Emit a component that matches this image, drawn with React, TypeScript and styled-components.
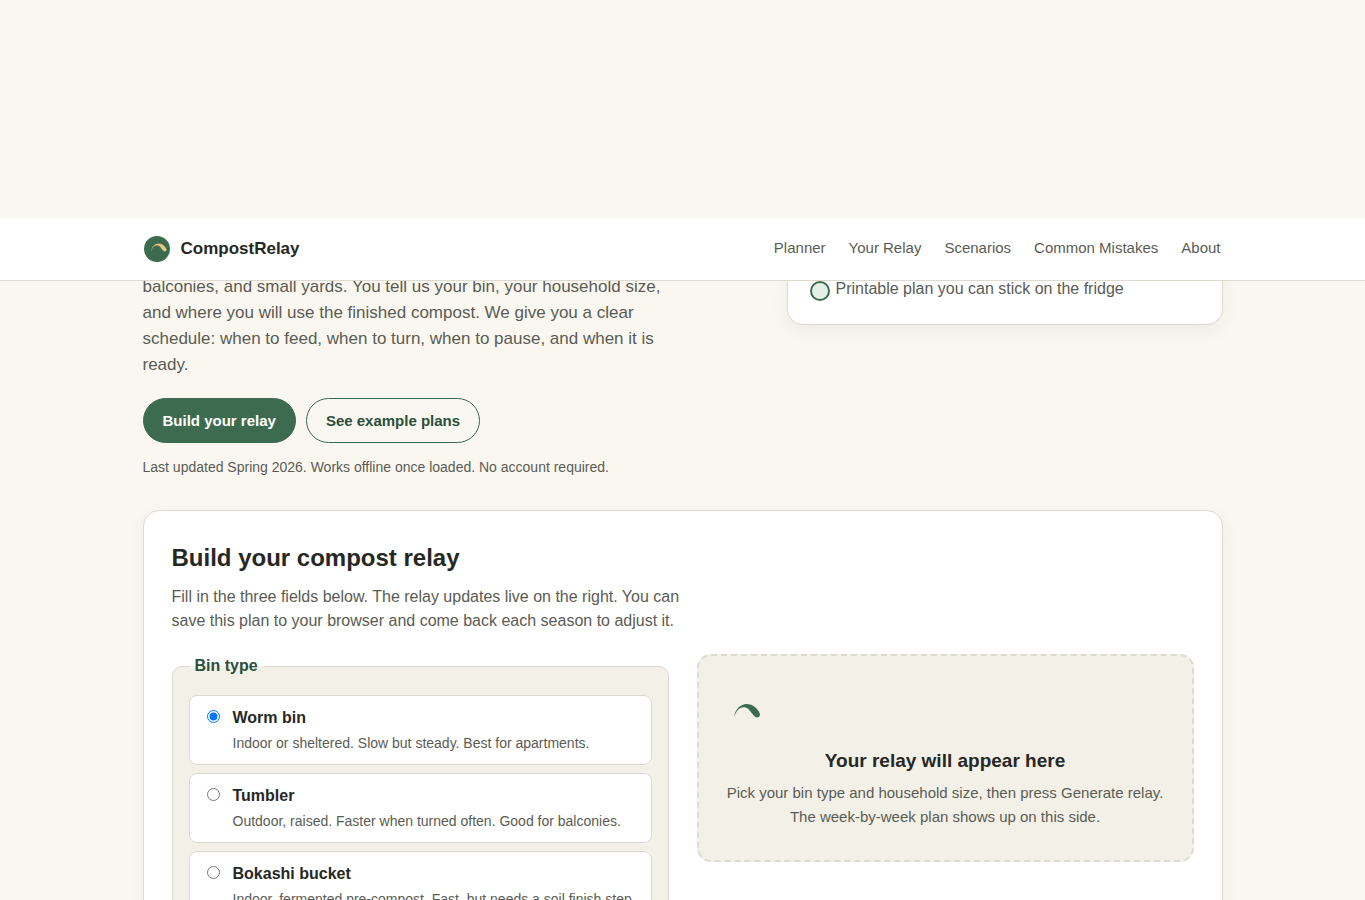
import React, { useState } from "react";
import styled, { createGlobalStyle } from "styled-components";

const color = {
  page: "#faf7f1",
  surface: "#ffffff",
  sunken: "#f3f0e8",
  line: "#dddbd0",
  ink: "#262824",
  muted: "#5a5c54",
  green: "#3d6b4f",
  greenDark: "#2a4f3a",
  mint: "#e3f0e7",
  sand: "#e6c77f",
};

const GlobalStyle = createGlobalStyle`
  *, *::before, *::after { box-sizing: border-box; }
  body {
    margin: 0;
    background: ${color.page};
    color: ${color.ink};
    font-family: "Liberation Sans", Arial, sans-serif;
    font-size: 16px;
    line-height: 24px;
  }
  h2, h3, p, ul { margin: 0; padding: 0; }
`;

const Page = styled.div`
  padding: 218px 0 40px;
`;

const Container = styled.div`
  width: 100%;
  max-width: 1120px;
  margin: 0 auto;
  padding: 0 20px;
`;

const Header = styled.header`
  position: relative;
  z-index: 2;
  background: ${color.surface};
  border-bottom: 1px solid ${color.line};
`;

const HeaderRow = styled(Container)`
  display: flex;
  align-items: center;
  justify-content: space-between;
  min-height: 62px;
`;

const Brand = styled.a`
  display: flex;
  align-items: center;
  gap: 10px;
  color: ${color.ink};
  font-size: 17px;
  font-weight: 700;
  text-decoration: none;
`;

const Nav = styled.nav`
  display: flex;
  gap: 23px;
  padding: 0 2px 2px 0;
`;

const NavLink = styled.a`
  color: ${color.muted};
  font-size: 15px;
  text-decoration: none;
`;

const Hero = styled(Container)`
  display: grid;
  grid-template-columns: minmax(0, 1fr) 436px;
  gap: 36px;
  align-items: start;
  margin-top: -7px;
`;

const Lead = styled.p`
  max-width: 520px;
  color: ${color.muted};
  font-size: 17px;
  line-height: 26px;
`;

const Actions = styled.div`
  display: flex;
  flex-wrap: wrap;
  gap: 10px;
  margin-top: 20px;
`;

const Button = styled.button<{ $outline?: boolean }>`
  padding: 10px 19px;
  border: 1px solid ${color.green};
  border-radius: 999px;
  background: ${(p) => (p.$outline ? "transparent" : color.green)};
  color: ${(p) => (p.$outline ? color.greenDark : "#ffffff")};
  font: 700 15px/23px "Liberation Sans", Arial, sans-serif;
  cursor: pointer;
`;

const FinePrint = styled.p`
  margin-top: 14px;
  color: ${color.muted};
  font-size: 14px;
  line-height: 21px;
`;

const SummaryCard = styled.ul`
  padding: 3px 22px 23px;
  border: 1px solid ${color.line};
  border-top: 0;
  border-radius: 0 0 16px 16px;
  background: ${color.surface};
  box-shadow: 0 6px 18px rgba(40, 50, 30, 0.06);
  list-style: none;
`;

const SummaryItem = styled.li`
  display: flex;
  align-items: flex-start;
  gap: 6px;
  color: ${color.muted};
`;

const Dot = styled.span`
  flex: none;
  width: 20px;
  height: 20px;
  margin-top: 4px;
  border: 2px solid ${color.green};
  border-radius: 50%;
  background: ${color.mint};
`;

const Planner = styled.section`
  margin-top: 32px;
  padding: 28px;
  border: 1px solid ${color.line};
  border-radius: 16px;
  background: ${color.surface};
  box-shadow: 0 6px 18px rgba(40, 50, 30, 0.06);
`;

const PlannerTitle = styled.h2`
  font-size: 24px;
  line-height: 38px;
`;

const PlannerIntro = styled.p`
  max-width: 520px;
  margin-top: 8px;
  color: ${color.muted};
`;

const Columns = styled.div`
  display: grid;
  grid-template-columns: repeat(2, minmax(0, 1fr));
  gap: 28px;
  align-items: start;
  margin-top: 21px;
`;

const Fieldset = styled.fieldset`
  min-width: 0;
  margin: 0;
  padding: 17px 16px;
  border: 1px solid ${color.line};
  border-radius: 10px;
  background: ${color.sunken};
`;

const Legend = styled.legend`
  padding: 0 6px;
  color: ${color.greenDark};
  font-weight: 700;
`;

const Options = styled.div`
  display: flex;
  flex-direction: column;
  gap: 8px;
`;

const Option = styled.label`
  display: flex;
  align-items: flex-start;
  gap: 10px;
  padding: 10px 12px;
  border: 1px solid ${color.line};
  border-radius: 8px;
  background: ${color.surface};
  cursor: pointer;
`;

const Radio = styled.input`
  flex: none;
  width: 13px;
  height: 13px;
  margin: 4px 3px 0 5px;
`;

const OptionName = styled.span`
  display: block;
  font-weight: 700;
`;

const OptionHint = styled.span`
  display: block;
  margin-top: 2px;
  color: ${color.muted};
  font-size: 14px;
  line-height: 22px;
`;

const EmptyState = styled.section`
  padding: 24px;
  border: 2px dashed ${color.line};
  border-radius: 14px;
  background: ${color.sunken};
  text-align: center;

  svg { display: block; }
`;

const EmptyTitle = styled.h3`
  margin-top: 19px;
  font-size: 19px;
  line-height: 28px;
`;

const EmptyText = styled.p`
  margin-top: 6px;
  padding-bottom: 7px;
  color: ${color.muted};
  font-size: 15px;
`;

const arc =
  "M11 37.5C12 29 18 24 23.5 24C30 24 35 29 36.8 33.5C37.6 36.8 34.6 38.8 32 36.8C28 33 26 27.2 21 27.2C16 27.2 13 31 11 37.5Z";

const links = [
  ["Planner", "#planner"],
  ["Your Relay", "#relay"],
  ["Scenarios", "#scenarios"],
  ["Common Mistakes", "#mistakes"],
  ["About", "#about"],
];

const bins = [
  { id: "worm", name: "Worm bin", hint: "Indoor or sheltered. Slow but steady. Best for apartments." },
  { id: "tumbler", name: "Tumbler", hint: "Outdoor, raised. Faster when turned often. Good for balconies." },
  { id: "bokashi", name: "Bokashi bucket", hint: "Indoor, fermented pre-compost. Fast, but needs a soil finish step." },
];

export default function App() {
  const [bin, setBin] = useState("worm");

  return (
    <Page>
      <GlobalStyle />
      <Header>
        <HeaderRow>
          <Brand href="#top">
            <svg width="28" height="28" viewBox="0 0 28 28" aria-hidden="true">
              <circle cx="14" cy="14" r="13" fill={color.green} />
              <path d={arc} fill={color.sand} transform="translate(1.4 -6) scale(.6)" />
            </svg>
            CompostRelay
          </Brand>
          <Nav aria-label="Main">
            {links.map(([label, href]) => (
              <NavLink key={href} href={href}>{label}</NavLink>
            ))}
          </Nav>
        </HeaderRow>
      </Header>

      <main>
        <Hero>
          <div>
            <Lead>
              balconies, and small yards. You tell us your bin, your household size,
              and where you will use the finished compost. We give you a clear
              schedule: when to feed, when to turn, when to pause, and when it is ready.
            </Lead>
            <Actions>
              <Button type="button">Build your relay</Button>
              <Button type="button" $outline>See example plans</Button>
            </Actions>
            <FinePrint>
              Last updated Spring 2026. Works offline once loaded. No account required.
            </FinePrint>
          </div>
          <SummaryCard>
            <SummaryItem>
              <Dot />
              Printable plan you can stick on the fridge
            </SummaryItem>
          </SummaryCard>
        </Hero>

        <Container>
          <Planner id="planner">
            <PlannerTitle>Build your compost relay</PlannerTitle>
            <PlannerIntro>
              Fill in the three fields below. The relay updates live on the right. You can
              save this plan to your browser and come back each season to adjust it.
            </PlannerIntro>
            <Columns>
              <Fieldset>
                <Legend>Bin type</Legend>
                <Options>
                  {bins.map(({ id, name, hint }) => (
                    <Option key={id}>
                      <Radio
                        type="radio"
                        name="bin"
                        value={id}
                        checked={bin === id}
                        onChange={() => setBin(id)}
                      />
                      <span>
                        <OptionName>{name}</OptionName>
                        <OptionHint>{hint}</OptionHint>
                      </span>
                    </Option>
                  ))}
                </Options>
              </Fieldset>
              <EmptyState id="relay">
                <svg width="48" height="48" viewBox="0 0 48 48" aria-hidden="true">
                  <path d={arc} fill={color.green} />
                </svg>
                <EmptyTitle>Your relay will appear here</EmptyTitle>
                <EmptyText>
                  Pick your bin type and household size, then press Generate relay.
                  The week-by-week plan shows up on this side.
                </EmptyText>
              </EmptyState>
            </Columns>
          </Planner>
        </Container>
      </main>
    </Page>
  );
}
